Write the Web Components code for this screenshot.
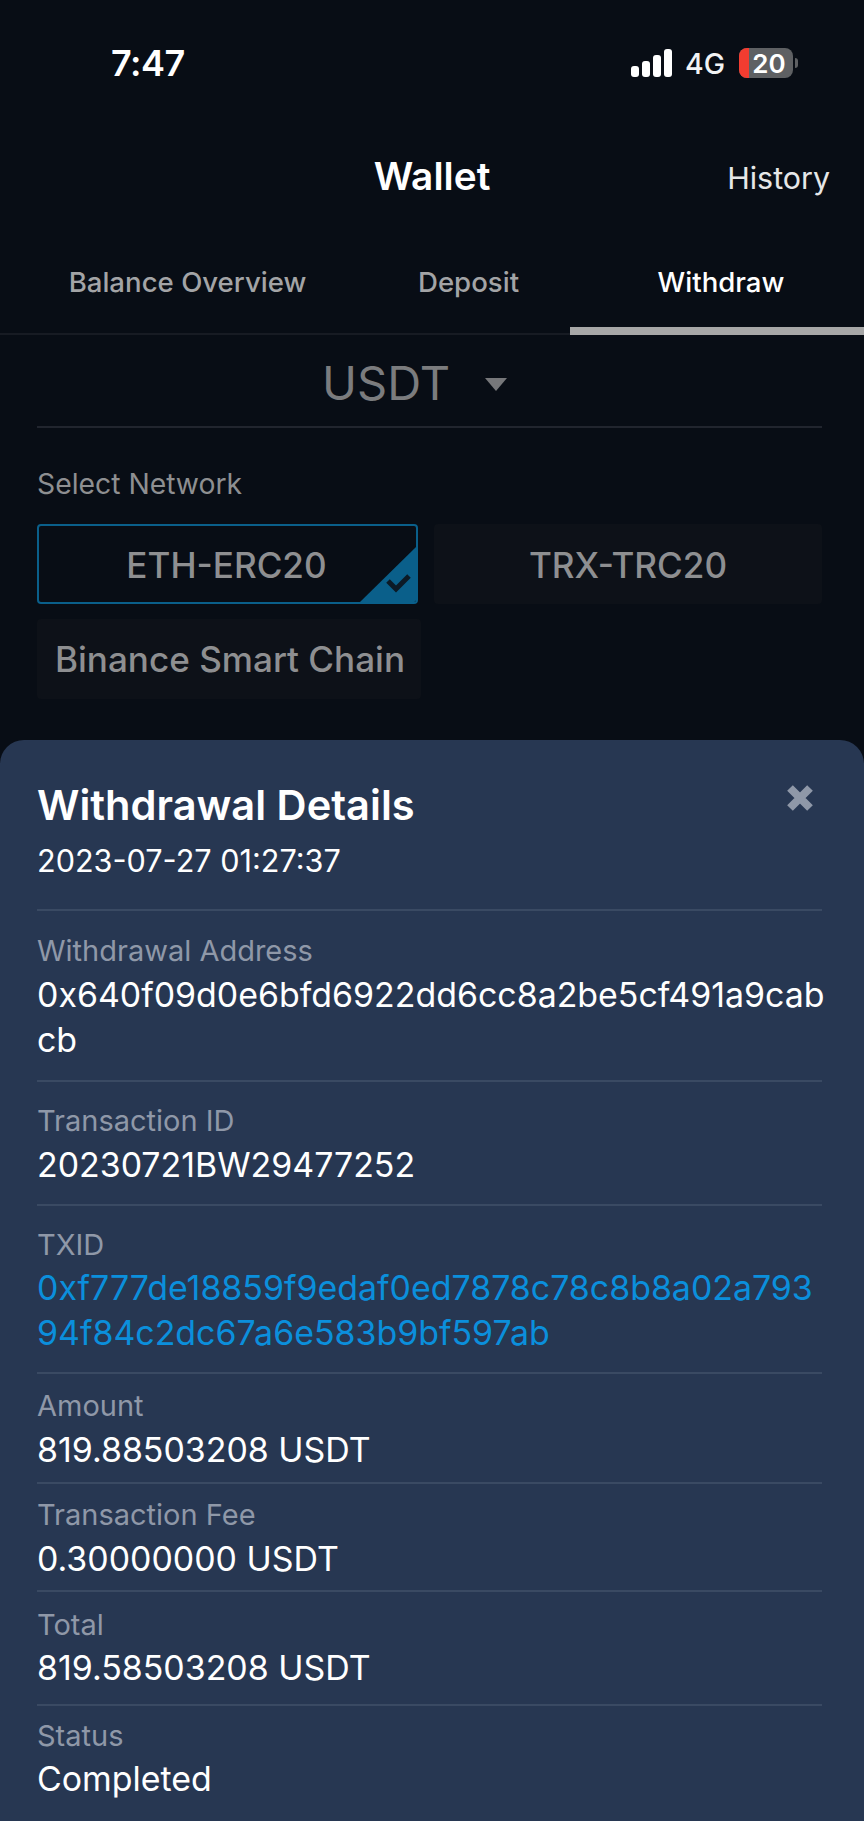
<!DOCTYPE html>
<html>
<head>
<meta charset="utf-8">
<style>
  html, body { margin: 0; background: #080d15; }
  body { font-family: Inter, "Liberation Sans", sans-serif; }
</style>
</head>
<body>
<wallet-screen>
  <status-bar></status-bar>
  <wallet-header></wallet-header>
  <wallet-tabs></wallet-tabs>
  <coin-select></coin-select>
  <network-select></network-select>
  <withdrawal-sheet slot="sheet">
    <detail-row label="Withdrawal Address" style="--top:19px;--bottom:18px">0x640f09d0e6bfd6922dd6cc8a2be5cf491a9cabcb</detail-row>
    <detail-row label="Transaction ID" style="--top:18px;--bottom:17px">20230721BW29477252</detail-row>
    <detail-row label="TXID" link style="--top:18px;--bottom:17px;--label:41px">0xf777de18859f9edaf0ed7878c78c8b8a02a79394f84c2dc67a6e583b9bf597ab</detail-row>
    <detail-row label="Amount" style="--top:11px;--bottom:10px">819.88503208 USDT</detail-row>
    <detail-row label="Transaction Fee" style="--top:10px;--bottom:9px">0.30000000 USDT</detail-row>
    <detail-row label="Total" style="--top:13px;--bottom:14px;--label:40px">819.58503208 USDT</detail-row>
    <detail-row label="Status" last style="--top:9px;--bottom:0px;--label:41px">Completed</detail-row>
  </withdrawal-sheet>
</wallet-screen>

<script>
class WalletScreen extends HTMLElement {
  constructor() {
    super();
    this.attachShadow({ mode: 'open' }).innerHTML = `
      <style>
        :host {
          display: block;
          position: relative;
          width: 864px;
          height: 1821px;
          overflow: hidden;
          background: #080d15;
          color: #fff;
        }
        ::slotted([slot="sheet"]) {
          position: absolute;
          left: 0;
          right: 0;
          top: 740px;
          bottom: 0;
        }
      </style>
      <slot></slot>
      <slot name="sheet"></slot>`;
  }
}

class StatusBar extends HTMLElement {
  constructor() {
    super();
    this.attachShadow({ mode: 'open' }).innerHTML = `
      <style>
        :host {
          display: flex;
          justify-content: space-between;
          align-items: center;
          height: 48px;
          padding: 39px 66px 0 111px;
        }
        .time { font-size: 36px; font-weight: 600; letter-spacing: -0.5px; }
        .right { display: flex; align-items: center; }
        .net { font-size: 28.5px; font-weight: 500; margin: 0 14px 0 13px; color: #f2f3f4; }
        .batt { position: relative; width: 54px; height: 30px; border-radius: 8px; background: #5e6063; overflow: hidden;
          display: flex; align-items: center; justify-content: center; padding-left: 6px; box-sizing: border-box;
          font-size: 26px; font-weight: 600; }
        .batt i { position: absolute; left: 0; top: 0; bottom: 0; width: 10px; background: #f23c30; }
        .batt span { position: relative; }
        .nub { width: 3px; height: 10px; background: #5e6063; border-radius: 0 3px 3px 0; margin-left: 2px; }
      </style>
      <span class="time">7:47</span>
      <div class="right">
        <svg width="41" height="28" viewBox="0 0 41 28" fill="#fff">
          <rect x="0" y="17" width="8" height="11" rx="3"/>
          <rect x="11" y="12" width="8" height="16" rx="3"/>
          <rect x="22" y="6" width="8" height="22" rx="3"/>
          <rect x="33" y="0" width="8" height="28" rx="3"/>
        </svg>
        <span class="net">4G</span>
        <div class="batt"><i></i><span>20</span></div>
        <div class="nub"></div>
      </div>`;
  }
}

class WalletHeader extends HTMLElement {
  constructor() {
    super();
    this.attachShadow({ mode: 'open' }).innerHTML = `
      <style>
        :host {
          display: flex;
          align-items: center;
          justify-content: center;
          position: relative;
          height: 60px;
          margin: 58px 0 35px;
        }
        .title { font-size: 38.8px; font-weight: 600; }
        .history { position: absolute; right: 34px; top: 15px; font-size: 30.4px; color: #e6e7e8; }
      </style>
      <span class="title">Wallet</span>
      <span class="history">History</span>`;
  }
}

class WalletTabs extends HTMLElement {
  constructor() {
    super();
    this.attachShadow({ mode: 'open' }).innerHTML = `
      <style>
        :host {
          display: grid;
          grid-template-columns: 339px 231px 294px;
          height: 95px;
          border-bottom: 2px solid #171b23;
          box-sizing: border-box;
          font-size: 27.6px;
          font-weight: 500;
          color: #a3a4a6;
        }
        div { display: flex; align-items: flex-start; justify-content: center; padding-top: 25px; }
        div:nth-of-type(1) { padding-left: 36px; }
        div:nth-of-type(2) { padding-left: 28px; }
        div:nth-of-type(3) { padding-left: 8px; }
        .on { color: #fff; border-bottom: 8px solid #a7a7a7; margin-bottom: -2px; }
      </style>
      <div>Balance Overview</div>
      <div>Deposit</div>
      <div class="on">Withdraw</div>`;
  }
}

class CoinSelect extends HTMLElement {
  constructor() {
    super();
    this.attachShadow({ mode: 'open' }).innerHTML = `
      <style>
        :host {
          display: flex;
          align-items: center;
          justify-content: center;
          gap: 35px;
          height: 93px;
          margin: 0 42px 0 37px;
          padding: 4px 30px 0 0;
          box-sizing: border-box;
          border-bottom: 2px solid #21252e;
          font-size: 47px;
          color: #7b7c7e;
        }
        svg { margin-top: 4px; }
      </style>
      <span>USDT</span>
      <svg width="22" height="13" viewBox="0 0 22 13"><path d="M0 0h22L11 13z" fill="#76777a"/></svg>`;
  }
}

class NetworkSelect extends HTMLElement {
  constructor() {
    super();
    this.attachShadow({ mode: 'open' }).innerHTML = `
      <style>
        :host {
          display: block;
          padding: 38px 42px 0 37px;
          font-weight: 500;
          color: #8e8f91;
        }
        .label { font-size: 28.3px; font-weight: 400; line-height: 36px; margin-bottom: 22px; }
        .grid { display: grid; grid-template-columns: 381px 388px; justify-content: space-between; row-gap: 15px; }
        .opt { position: relative; height: 80px; border-radius: 4px; background: #0d1118; display: flex; align-items: center; justify-content: center; font-size: 35.1px; box-sizing: border-box; white-space: nowrap; padding-top: 2px; }
        .opt.sel { background: #080d15; border: 2px solid #0a5f8a; overflow: hidden; padding-right: 2px; }
        .opt.wide { width: 384px; padding: 0 0 0 2px; }
        .corner { position: absolute; right: 0; bottom: 0; }
        .sliver { display: block; margin-top: 42px; }
      </style>
      <div class="label">Select Network</div>
      <div class="grid">
        <div class="opt sel">ETH-ERC20
          <svg class="corner" width="56" height="55" viewBox="0 0 56 55">
            <path d="M56 0V55H0z" fill="#0a5f8a"/>
            <path d="M28 34l8 8 13-13" fill="none" stroke="#0c1a26" stroke-width="5"/>
          </svg>
        </div>
        <div class="opt">TRX-TRC20</div>
        <div class="opt wide">Binance Smart Chain</div>
      </div>
      <svg class="sliver" width="130" height="4" viewBox="0 0 130 4" fill="#6a6c70">
        <rect x="4" y="0" width="2" height="4"/>
        <rect x="13" y="0" width="14" height="4"/>
        <rect x="41" y="0" width="3" height="4"/>
        <rect x="55" y="0" width="6" height="4"/>
        <rect x="71" y="0" width="15" height="4"/>
        <rect x="96" y="0" width="2" height="4"/>
        <rect x="122" y="0" width="8" height="4"/>
      </svg>`;
  }
}

class WithdrawalSheet extends HTMLElement {
  constructor() {
    super();
    this.attachShadow({ mode: 'open' }).innerHTML = `
      <style>
        :host {
          display: block;
          box-sizing: border-box;
          background: #273752;
          border-radius: 24px 24px 0 0;
          padding: 0 42px 0 37px;
          color: #fff;
        }
        header { position: relative; height: 171px; box-sizing: border-box; padding-top: 40px; border-bottom: 2px solid #3a4a63; }
        h2 { margin: 0; font-size: 41.6px; line-height: 50px; font-weight: 600; }
        .date { font-size: 30.6px; line-height: 40px; margin-top: 11px; }
        svg { position: absolute; right: 8px; top: 44px; }
      </style>
      <header>
        <h2>Withdrawal Details</h2>
        <div class="date">2023-07-27 01:27:37</div>
        <svg width="28" height="28" viewBox="0 0 28 28"><path d="M4 4l20 20M24 4L4 24" stroke="#8f98a8" stroke-width="8"/></svg>
      </header>
      <slot></slot>`;
  }
}

class DetailRow extends HTMLElement {
  constructor() {
    super();
    const link = this.hasAttribute('link');
    this.attachShadow({ mode: 'open' }).innerHTML = `
      <style>
        :host {
          display: block;
          box-sizing: border-box;
          padding: var(--top) 0 var(--bottom);
          border-bottom: 2px solid #3a4a63;
        }
        :host([last]) { border-bottom: 0; }
        .label { font-size: 29px; line-height: var(--label, 42px); color: #8f98a8; }
        .value { font-size: 33.9px; line-height: 45px; margin-right: -6px; word-break: break-all; color: ${link ? '#0b8fdc' : '#fff'}; }
      </style>
      <div class="label">${this.getAttribute('label')}</div>
      <div class="value"><slot></slot></div>`;
  }
}

customElements.define('wallet-screen', WalletScreen);
customElements.define('status-bar', StatusBar);
customElements.define('wallet-header', WalletHeader);
customElements.define('wallet-tabs', WalletTabs);
customElements.define('coin-select', CoinSelect);
customElements.define('network-select', NetworkSelect);
customElements.define('withdrawal-sheet', WithdrawalSheet);
customElements.define('detail-row', DetailRow);
</script>
</body>
</html>
